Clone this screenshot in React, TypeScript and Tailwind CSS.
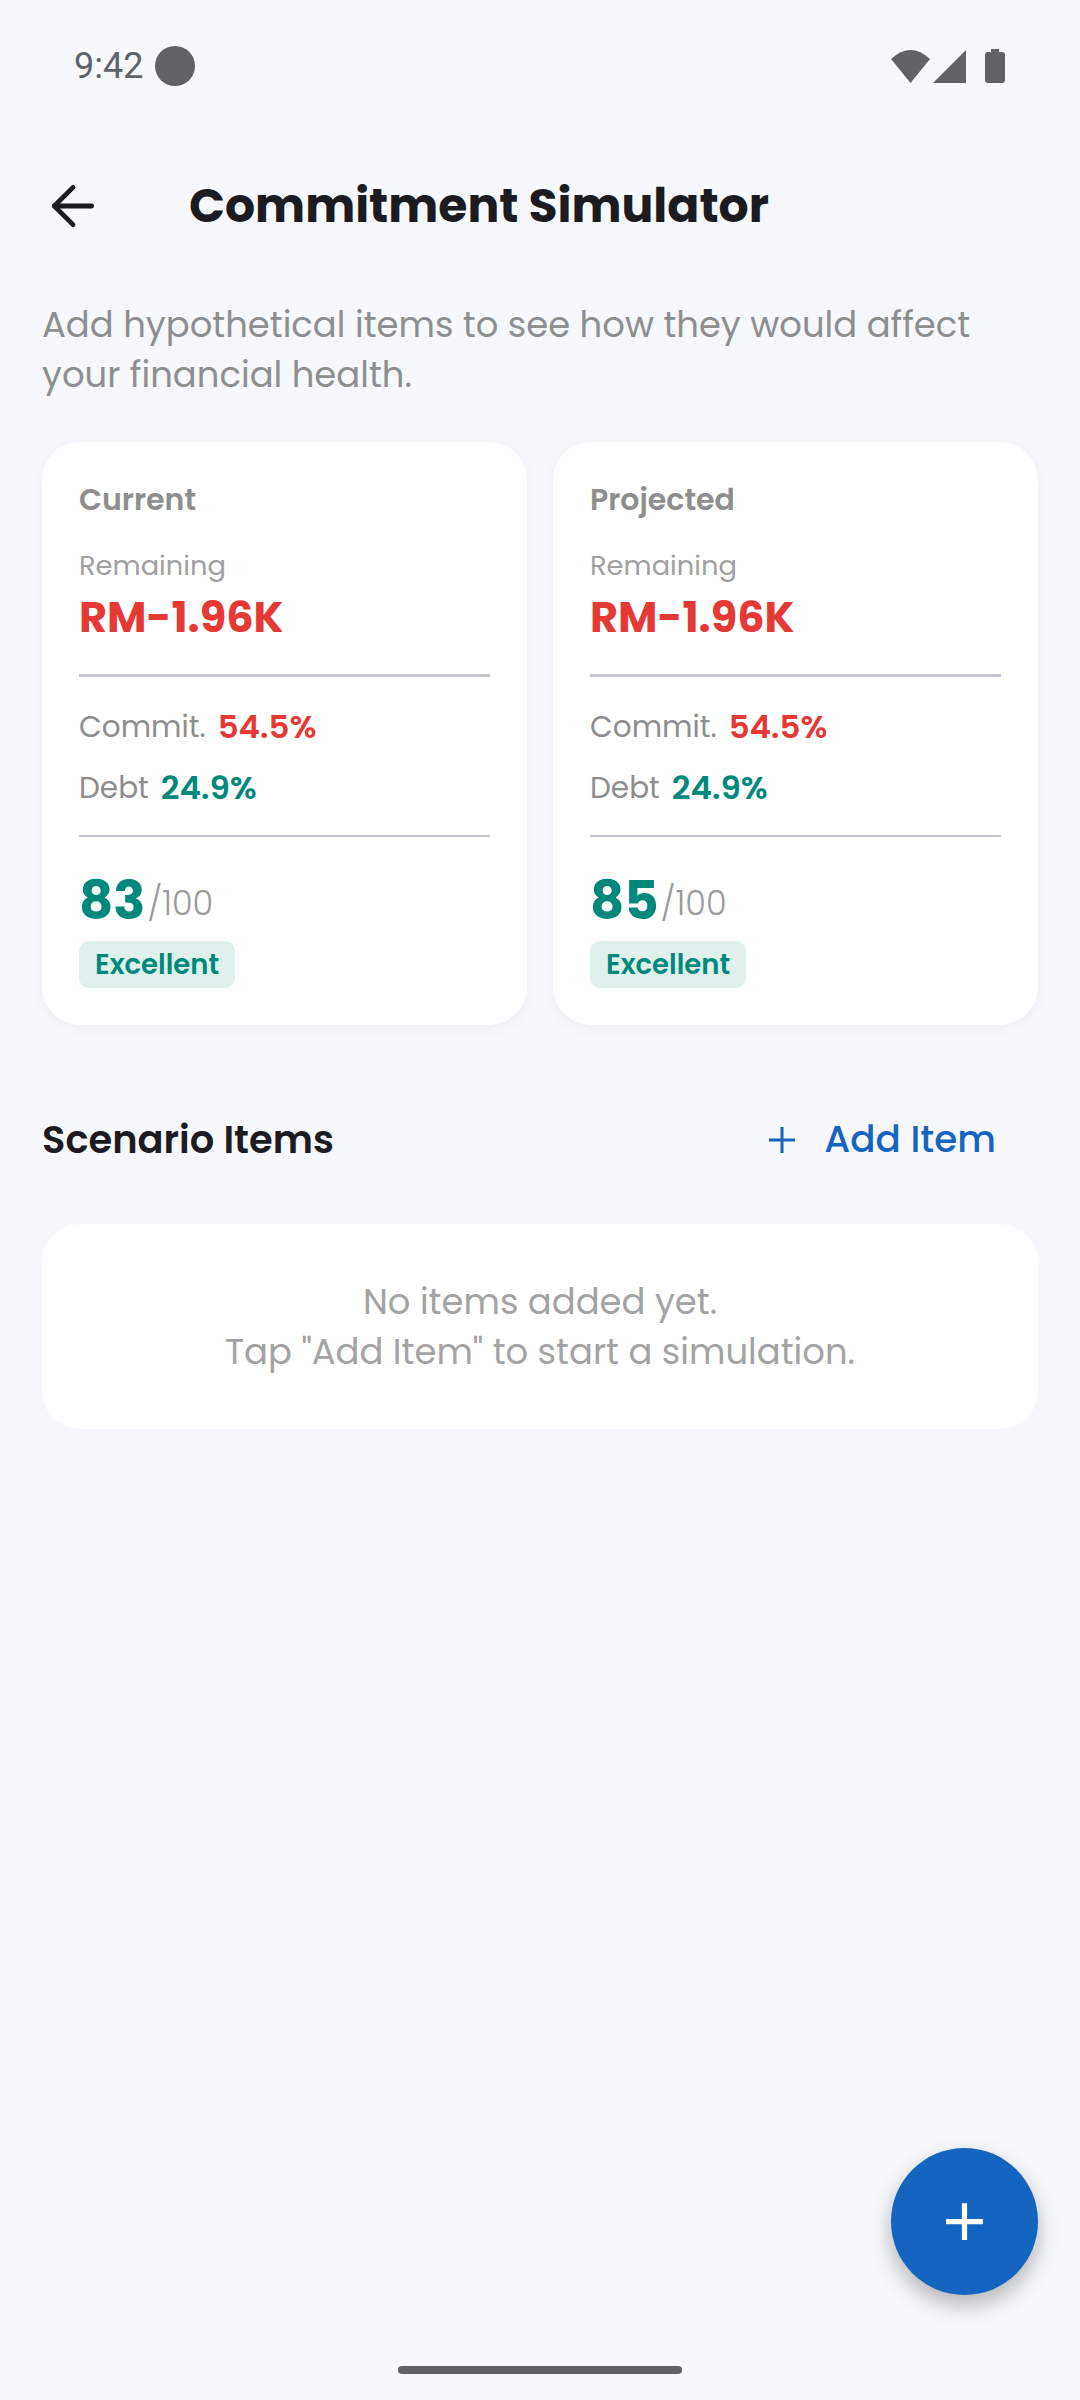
import { ArrowLeft } from "lucide-react";
import { MdAdd } from "react-icons/md";

const font = "font-['Poppins','Lato','Noto_Sans',sans-serif]";

const StatCard = ({ title, score }: { title: string; score: number }) => (
  <div className="flex-1 h-[583px] bg-white rounded-[38px] px-[37px] pt-[38px] shadow-[0_4px_14px_rgba(20,30,60,0.04)]">
    <p className="text-[30px] leading-[40px] font-semibold text-[#8e8e8e]">{title}</p>
    <p className="mt-[29px] text-[27.3px] leading-[34px] text-[#a0a0a0]">Remaining</p>
    <p className="mt-[8px] text-[43px] leading-[52px] font-bold text-[#e53935]">RM-1.96K</p>
    <div className="mt-[31px] h-[3px] bg-[#c4c6d0]" />
    <div className="mt-[31px] flex items-center gap-[12px] h-[38px]">
      <span className="text-[29.5px] text-[#8e8e8e]">Commit.</span>
      <span className="text-[32.5px] font-semibold text-[#e53935]">54.5%</span>
    </div>
    <div className="mt-[23px] flex items-center gap-[12px] h-[38px]">
      <span className="text-[29.5px] text-[#8e8e8e]">Debt</span>
      <span className="text-[32.5px] font-semibold text-[#00897b]">24.9%</span>
    </div>
    <div className="mt-[28px] h-[2px] bg-[#c4c6d0]" />
    <div className="mt-[33px] flex items-center h-[62px]">
      <span className="text-[53px] leading-[62px] font-bold text-[#00897b]">{score}</span>
      <span className="ml-[2px] mt-[5px] text-[33.5px] leading-[40px] font-light text-[#9a9a9a]">/100</span>
    </div>
    <span className="mt-[9px] inline-block bg-[#e0f0ed] rounded-[10px] px-[16px] h-[47px] leading-[48px] text-[27.5px] font-semibold text-[#00897b]">
      Excellent
    </span>
  </div>
);

export default function App() {
  return (
    <div className={`${font} w-[1080px] h-[2400px] bg-[#f6f8fc] flex flex-col relative overflow-hidden`}>
      {/* status bar */}
      <div className="h-[132px] flex items-center justify-between pl-[74px] pr-[75px] shrink-0">
        <div className="flex items-center gap-[12px]">
          <span className="font-['Roboto'] text-[36px] text-[#5f6368]">9:42</span>
          <span className="w-[40px] h-[40px] rounded-full bg-[#5f6368]" />
        </div>
        <div className="flex items-center">
          <svg width="39" height="33" viewBox="0 0 39 33"><path d="M0 9 Q19.5 -9 39 9 L19.5 33 Z" fill="#5f6368" /></svg>
          <svg width="33" height="33" viewBox="0 0 33 33" className="ml-[3px]"><path d="M33 0 V33 H0 Z" fill="#5f6368" /></svg>
          <svg width="20" height="34" viewBox="0 0 20 34" className="ml-[19px]"><path d="M6 0 H14 V3 H17 Q20 3 20 6 V31 Q20 34 17 34 H3 Q0 34 0 31 V6 Q0 3 3 3 H6 Z" fill="#5f6368" /></svg>
        </div>
      </div>

      {/* app bar */}
      <div className="h-[148px] flex items-center pl-[41px] shrink-0">
        <ArrowLeft size={64} strokeWidth={1.8} className="text-[#1c1b1f]" />
        <h1 className="ml-[84px] text-[47.25px] font-bold text-[#1c1b1f]">Commitment Simulator</h1>
      </div>

      <div className="px-[42px] mt-[20px]">
        <p className="text-[35.4px] leading-[50px] text-[#8e8e8e]">
          Add hypothetical items to see how they would affect your financial health.
        </p>

        <div className="mt-[42px] flex gap-[26px]">
          <StatCard title="Current" score={83} />
          <StatCard title="Projected" score={85} />
        </div>

        <div className="mt-[75px] flex items-center justify-between pr-[42px] h-[80px]">
          <h2 className="text-[38.4px] font-semibold text-[#1c1b1f]">Scenario Items</h2>
          <div className="flex items-center gap-[29px] text-[#1565c0]">
            <svg width="26" height="26" viewBox="0 0 26 26"><path d="M13 0 V26 M0 13 H26" stroke="currentColor" strokeWidth="3" fill="none" /></svg>
            <span className="text-[37.3px] font-medium">Add Item</span>
          </div>
        </div>

        <div className="mt-[44px] h-[205px] bg-white rounded-[38px] flex flex-col items-center justify-center text-[35.4px] leading-[50px] text-[#a3a3a3]">
          <p>No items added yet.</p>
          <p>Tap "Add Item" to start a simulation.</p>
        </div>
      </div>

      {/* fab */}
      <button className="absolute left-[891px] top-[2148px] w-[147px] h-[147px] rounded-full bg-[#1565c0] flex items-center justify-center shadow-[0_10px_22px_rgba(0,0,0,0.28)]">
        <MdAdd size={63} className="text-white" />
      </button>

      {/* gesture bar */}
      <div className="absolute left-[398px] top-[2366px] w-[284px] h-[8px] rounded-full bg-[#5f6368]" />
    </div>
  );
}
